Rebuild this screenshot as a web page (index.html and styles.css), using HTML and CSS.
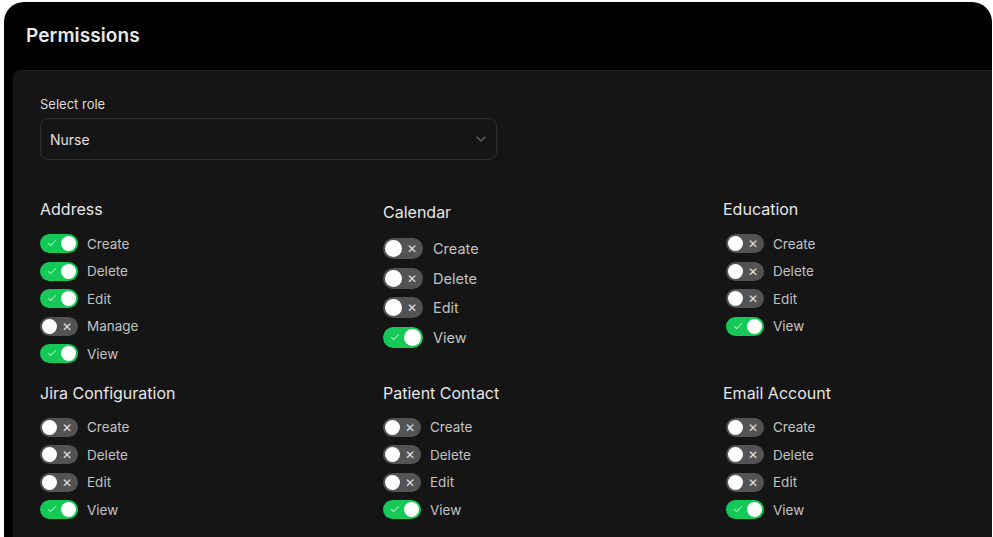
FILE: index.html
```html
<!DOCTYPE html>
<html lang="en">
<head>
    <meta charset="UTF-8">
    <meta name="viewport" content="width=device-width, initial-scale=1.0">
    <title>Permissions</title>
    <link rel="stylesheet" href="styles.css">
</head>
<body>
    <div class="card">
        <div class="card-head">Permissions</div>

        <div class="panel">
            <label class="field-label">Select role</label>
            <div class="select">
                <span>Nurse</span>
                <svg class="chevron" width="10" height="6" viewBox="0 0 10 6"><path d="M1 1l4 4 4-4" fill="none" stroke="#6b6b6b" stroke-width="1.2" stroke-linecap="round" stroke-linejoin="round"/></svg>
            </div>

            <div class="groups">
                <!-- Address -->
                <div class="group">
                    <div class="group-title">Address</div>
                    <div class="perm"><span class="toggle on"></span>Create</div>
                    <div class="perm"><span class="toggle on"></span>Delete</div>
                    <div class="perm"><span class="toggle on"></span>Edit</div>
                    <div class="perm"><span class="toggle"></span>Manage</div>
                    <div class="perm"><span class="toggle on"></span>View</div>
                </div>

                <!-- Calendar -->
                <div class="group group-lg">
                    <div class="group-title">Calendar</div>
                    <div class="perm"><span class="toggle"></span>Create</div>
                    <div class="perm"><span class="toggle"></span>Delete</div>
                    <div class="perm"><span class="toggle"></span>Edit</div>
                    <div class="perm"><span class="toggle on"></span>View</div>
                </div>

                <!-- Education -->
                <div class="group group-right">
                    <div class="group-title">Education</div>
                    <div class="perm"><span class="toggle"></span>Create</div>
                    <div class="perm"><span class="toggle"></span>Delete</div>
                    <div class="perm"><span class="toggle"></span>Edit</div>
                    <div class="perm"><span class="toggle on"></span>View</div>
                </div>

                <!-- Jira -->
                <div class="group">
                    <div class="group-title">Jira Configuration</div>
                    <div class="perm"><span class="toggle"></span>Create</div>
                    <div class="perm"><span class="toggle"></span>Delete</div>
                    <div class="perm"><span class="toggle"></span>Edit</div>
                    <div class="perm"><span class="toggle on"></span>View</div>
                </div>

                <!-- Patient Contact -->
                <div class="group">
                    <div class="group-title">Patient Contact</div>
                    <div class="perm"><span class="toggle"></span>Create</div>
                    <div class="perm"><span class="toggle"></span>Delete</div>
                    <div class="perm"><span class="toggle"></span>Edit</div>
                    <div class="perm"><span class="toggle on"></span>View</div>
                </div>

                <!-- Email Account -->
                <div class="group group-right">
                    <div class="group-title">Email Account</div>
                    <div class="perm"><span class="toggle"></span>Create</div>
                    <div class="perm"><span class="toggle"></span>Delete</div>
                    <div class="perm"><span class="toggle"></span>Edit</div>
                    <div class="perm"><span class="toggle on"></span>View</div>
                </div>
            </div>
        </div>
    </div>
</body>
</html>
```

FILE: styles.css
```css
body {
    margin: 0;
    background: #ffffff;
    font-family: Inter, "Noto Sans", sans-serif;
    color: #e6e6e6;
    overflow: hidden;
}

.card {
    margin: 2px 1px 0 4px;
    height: 560px;
    background: #000;
    border-radius: 20px 20px 0 0;
    overflow: hidden;
}

.card-head {
    height: 68px;
    padding-left: 22px;
    font-size: 19px;
    font-weight: 600;
    line-height: 68px;
    color: #e8e8e8;
    letter-spacing: 0.1px;
}

.panel {
    margin-left: 9px;
    height: 500px;
    background: #151515;
    border-top: 1px solid #1f1f1f;
    border-radius: 8px 0 0 0;
    padding: 25px 0 0 27px;
}

.field-label {
    display: block;
    font-size: 13px;
    line-height: 16px;
    color: #dcdcdc;
    margin-bottom: 6px;
}

.select {
    width: 436px;
    height: 40px;
    border: 1px solid #2f2f2f;
    border-radius: 8px;
    display: flex;
    align-items: center;
    justify-content: space-between;
    padding: 0 10px 0 9px;
    box-sizing: content-box;
    font-size: 14px;
    color: #e0e0e0;
}

.groups {
    display: grid;
    grid-template-columns: 343px 340px 1fr;
    row-gap: 11px;
    margin-top: 39px;
}

.group-title {
    font-size: 16px;
    line-height: 20px;
    font-weight: 400;
    color: #e6e6e6;
    margin-bottom: 15px;
}

.perm {
    display: flex;
    align-items: center;
    height: 19px;
    margin-bottom: 8.5px;
    font-size: 13.5px;
    color: #c2c2c2;
}

.toggle {
    position: relative;
    width: 38px;
    height: 19px;
    border-radius: 10px;
    background: #535353;
    margin-right: 9px;
    flex-shrink: 0;
}

.toggle::before {
    content: "";
    position: absolute;
    top: 2px;
    left: 2px;
    width: 15px;
    height: 15px;
    border-radius: 50%;
    background: #fff;
}

.toggle::after {
    content: "\2715";
    position: absolute;
    right: 6px;
    top: 0;
    font-size: 12px;
    line-height: 19px;
    color: #e0e0e0;
}

.toggle.on {
    background: #14c957;
}

.toggle.on::before {
    left: auto;
    right: 2px;
}

.toggle.on::after {
    content: "";
    right: auto;
    left: 8px;
    top: 6px;
    width: 7px;
    height: 3px;
    border-left: 1px solid #a6f2c1;
    border-bottom: 1px solid #a6f2c1;
    transform: rotate(-45deg);
}

/* calendar is rendered a bit larger in the reference */
.group-lg {
    padding-top: 3px;
}

.group-lg .group-title {
    margin-bottom: 16px;
}

.group-lg .perm {
    height: 21px;
    margin-bottom: 8.5px;
    font-size: 14.5px;
}

.group-lg .toggle {
    width: 40px;
    height: 21px;
    border-radius: 11px;
    margin-right: 10px;
}

.group-lg .toggle::before {
    width: 17px;
    height: 17px;
}

.group-lg .toggle::after {
    line-height: 21px;
}

.group-lg .toggle.on::after {
    top: 7px;
    line-height: normal;
}

.group-right .perm {
    padding-left: 3px;
}
```
